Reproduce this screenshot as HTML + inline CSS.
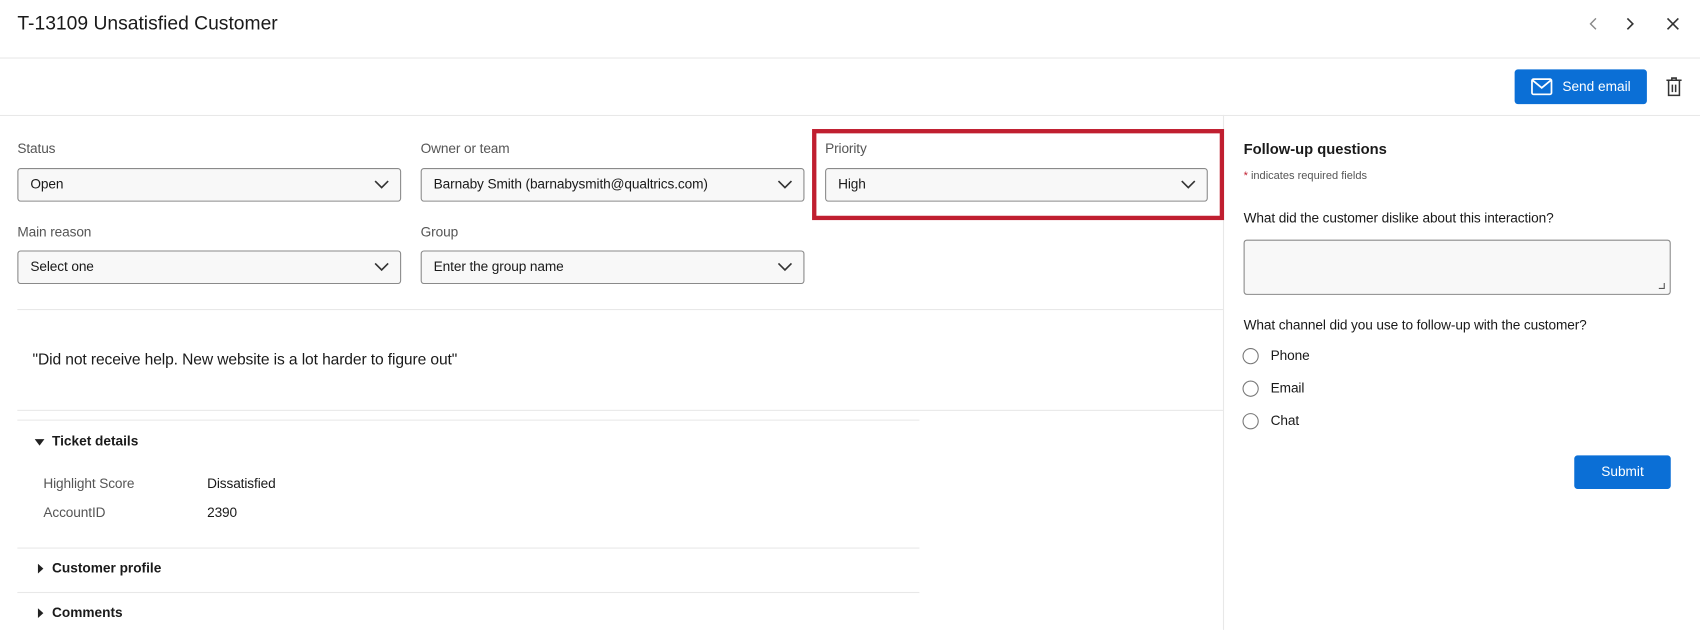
<!DOCTYPE html>
<html><head><meta charset="utf-8"><style>
*{box-sizing:border-box;margin:0;padding:0}
html,body{width:1700px;height:630px;overflow:hidden;background:#fff}
#w{position:absolute;left:0;top:0;width:1568px;height:581px;transform:scale(1.0842);transform-origin:0 0;font-family:"Liberation Sans",sans-serif;color:#1a1a1a}
.a{position:absolute}
.hl{position:absolute;height:1px;background:#e8e8e8}
.lbl{position:absolute;font-size:12.6px;color:#555;letter-spacing:-0.1px}
.sel{position:absolute;height:31px;background:#f8f8f8;border:1px solid #8a8a8a;border-radius:3px;font-size:12.6px;line-height:29px;padding-left:11px;letter-spacing:-0.1px}
.sel svg{position:absolute;right:10px;top:10px}
.b{font-weight:bold;font-size:12.6px}
.rad{position:absolute;width:15px;height:15px;border:1px solid #777;border-radius:50%}
.t{font-size:12.6px;letter-spacing:-0.1px}
</style></head><body><div id="w">
<div class="a" style="left:16px;top:11px;font-size:17.8px">T-13109 Unsatisfied Customer</div>
<svg class="a" style="left:1464px;top:15px" width="12" height="14"><path d="M8 2L3 7L8 12" stroke="#888" fill="none" stroke-width="1.3"/></svg>
<svg class="a" style="left:1498px;top:15px" width="12" height="14"><path d="M3 2L8 7L3 12" stroke="#333" fill="none" stroke-width="1.5"/></svg>
<svg class="a" style="left:1536px;top:15px" width="14" height="14"><path d="M2 2L12 12M12 2L2 12" stroke="#333" fill="none" stroke-width="1.5"/></svg>
<div class="hl" style="left:0;top:53px;width:1568px"></div>
<div class="a" style="left:1397px;top:64px;width:122px;height:32px;background:#0b6fd6;border-radius:3px;color:#fff;font-size:12.6px;line-height:32px;padding-left:44px">Send email</div>
<svg class="a" style="left:1412px;top:72px" width="20" height="16"><rect x="1" y="1" width="18" height="14" rx="1.5" fill="none" stroke="#fff" stroke-width="1.6"/><path d="M1.5 2L10 9L18.5 2" fill="none" stroke="#fff" stroke-width="1.6"/></svg>
<svg class="a" style="left:1536px;top:70px" width="16" height="20"><path d="M1 4H15M6 4V2H10V4M3 4V18H13V4M6.5 8V15M9.5 8V15" fill="none" stroke="#333" stroke-width="1.4"/></svg>
<div class="hl" style="left:0;top:106px;width:1568px"></div>
<div class="a" style="left:1128px;top:106px;width:1px;height:475px;background:#e8e8e8"></div>

<div class="lbl" style="left:16px;top:130px">Status</div>
<div class="lbl" style="left:388px;top:130px">Owner or team</div>
<div class="lbl" style="left:761px;top:130px">Priority</div>
<div class="sel" style="left:16px;top:155px;width:354px">Open<svg width="14" height="9"><path d="M1 1L7 7L13 1" fill="none" stroke="#333" stroke-width="1.5"/></svg></div>
<div class="sel" style="left:388px;top:155px;width:354px">Barnaby Smith (barnabysmith@qualtrics.com)<svg width="14" height="9"><path d="M1 1L7 7L13 1" fill="none" stroke="#333" stroke-width="1.5"/></svg></div>
<div class="sel" style="left:761px;top:155px;width:353px">High<svg width="14" height="9"><path d="M1 1L7 7L13 1" fill="none" stroke="#333" stroke-width="1.5"/></svg></div>
<div class="a" style="left:749px;top:119px;width:380px;height:84px;border:4px solid #c01f30"></div>
<div class="lbl" style="left:16px;top:207px">Main reason</div>
<div class="lbl" style="left:388px;top:207px">Group</div>
<div class="sel" style="left:16px;top:231px;width:354px">Select one<svg width="14" height="9"><path d="M1 1L7 7L13 1" fill="none" stroke="#333" stroke-width="1.5"/></svg></div>
<div class="sel" style="left:388px;top:231px;width:354px">Enter the group name<svg width="14" height="9"><path d="M1 1L7 7L13 1" fill="none" stroke="#333" stroke-width="1.5"/></svg></div>
<div class="hl" style="left:16px;top:285px;width:1112px"></div>
<div class="a" style="left:30px;top:324px;font-size:14.4px;letter-spacing:-0.1px">"Did not receive help. New website is a lot harder to figure out"</div>
<div class="hl" style="left:16px;top:378px;width:1112px"></div>
<div class="hl" style="left:16px;top:387px;width:832px"></div>
<svg class="a" style="left:32px;top:404px" width="10" height="8"><path d="M0 1H9L4.5 7Z" fill="#222"/></svg>
<div class="a b" style="left:48px;top:400px">Ticket details</div>
<div class="a t" style="left:40px;top:439px;color:#555">Highlight Score</div>
<div class="a t" style="left:191px;top:439px">Dissatisfied</div>
<div class="a t" style="left:40px;top:466px;color:#555">AccountID</div>
<div class="a t" style="left:191px;top:466px">2390</div>
<div class="hl" style="left:16px;top:505px;width:832px"></div>
<svg class="a" style="left:34px;top:520px" width="8" height="10"><path d="M1 0V9L6 4.5Z" fill="#222"/></svg>
<div class="a b" style="left:48px;top:517px">Customer profile</div>
<div class="hl" style="left:16px;top:546px;width:832px"></div>
<svg class="a" style="left:34px;top:561px" width="8" height="10"><path d="M1 0V9L6 4.5Z" fill="#222"/></svg>
<div class="a b" style="left:48px;top:558px">Comments</div>

<div class="a" style="left:1147px;top:130px;font-size:13.6px;font-weight:bold">Follow-up questions</div>
<div class="a" style="left:1147px;top:157px;font-size:10.2px;color:#555"><span style="color:#c01f30">*</span> indicates required fields</div>
<div class="a t" style="left:1147px;top:194px">What did the customer dislike about this interaction?</div>
<div class="a" style="left:1147px;top:221px;width:394px;height:51px;background:#f8f8f8;border:1px solid #8a8a8a;border-radius:3px"></div>
<svg class="a" style="left:1529px;top:260px" width="8" height="8"><path d="M6 1V6H1" fill="none" stroke="#555" stroke-width="1"/></svg>
<div class="a t" style="left:1147px;top:293px">What channel did you use to follow-up with the customer?</div>
<div class="rad" style="left:1146px;top:321px"></div><div class="a t" style="left:1172px;top:321px">Phone</div>
<div class="rad" style="left:1146px;top:351px"></div><div class="a t" style="left:1172px;top:351px">Email</div>
<div class="rad" style="left:1146px;top:381px"></div><div class="a t" style="left:1172px;top:381px">Chat</div>
<div class="a" style="left:1452px;top:420px;width:89px;height:31px;background:#0b6fd6;border-radius:3px;color:#fff;font-size:12.6px;line-height:31px;text-align:center">Submit</div>
</div></body></html>
